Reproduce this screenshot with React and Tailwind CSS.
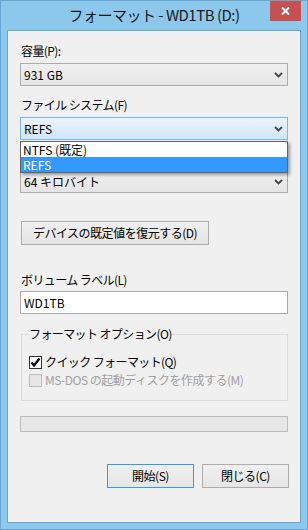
import React from 'react';

const font = { fontFamily: '"Noto Sans CJK JP", "Noto Sans", sans-serif' };

const Chevron = () => (
  <svg width="9" height="6" viewBox="0 0 9 6" className="shrink-0">
    <polyline points="1,1 4.5,4.5 8,1" fill="none" stroke="#444" strokeWidth="1.8" />
  </svg>
);

const Combo = ({ value, focused }) => (
  <div
    className={`w-[268px] h-[23px] border flex items-center justify-between pl-[3px] pr-[4px] text-[12px] leading-[16px] text-black ${
      focused
        ? 'border-[#7eb4ea] bg-gradient-to-b from-[#ecf4fc] to-[#d0e5f9]'
        : 'border-[#acacac] bg-gradient-to-b from-[#f0f0f0] to-[#e5e5e5]'
    }`}
  >
    <span>{value}</span>
    <Chevron />
  </div>
);

const Label = ({ children, className = '' }) => (
  <div className={`h-[16px] leading-[16px] text-[12px] tracking-[-0.6px] text-black pl-[1px] ${className}`}>{children}</div>
);

const Button = ({ children, className = '', primary }) => (
  <div
    className={`h-[24px] border flex items-center justify-center text-[12px] leading-[16px] tracking-[-0.5px] text-black bg-gradient-to-b from-[#f0f0f0] to-[#e5e5e5] ${
      primary ? 'border-[#3399ff]' : 'border-[#acacac]'
    } ${className}`}
  >
    {children}
  </div>
);

export default function App() {
  return (
    <div style={font} className="w-[308px] h-[530px] bg-[#8bc8ec] border border-[#6aa5d2] flex flex-col relative">
      {/* title bar */}
      <div className="h-[29px] flex items-center justify-center text-[15px] tracking-[-0.5px] text-[#1a1a1a]">
        フォーマット - WD1TB (D:)
      </div>
      <div className="absolute top-0 right-[6px] w-[31px] h-[20px] bg-[#c75050] flex items-center justify-center">
        <svg width="9" height="8" viewBox="0 0 9 8">
          <path d="M1 0.5 L8 7.5 M8 0.5 L1 7.5" stroke="#fff" strokeWidth="2" />
        </svg>
      </div>

      {/* client area */}
      <div className="flex-1 mx-[6px] mb-[6px] border border-[#6aa5d2] bg-[#f0f0f0] pl-[12px] flex flex-col">
        <Label className="mt-[12px]">容量(P):</Label>
        <div className="mt-[4px]">
          <Combo value="931 GB" />
        </div>

        <Label className="mt-[11px]">ファイル システム(F)</Label>
        <div className="mt-[4px] relative z-10">
          <Combo value="REFS" focused />
          <div className="absolute top-[24px] left-0 w-[268px] border border-[#646464] bg-white text-[12px] leading-[15px] shadow-[2px_2px_3px_rgba(0,0,0,0.35)]">
            <div className="h-[15px] pl-[2px] text-black">NTFS (既定)</div>
            <div className="h-[15px] pl-[2px] bg-[#3399ff] text-white">REFS</div>
          </div>
        </div>

        {/* allocation unit label sits under the open list */}
        <div className="mt-[10px] h-[16px]" />
        <div className="mt-[4px]">
          <Combo value="64 キロバイト" />
        </div>

        <Button className="mt-[28px] ml-[1px] w-[188px] h-[23px]">デバイスの既定値を復元する(D)</Button>

        <Label className="mt-[27px]">ボリューム ラベル(L)</Label>
        <div className="mt-[3px] w-[268px] h-[23px] border border-[#abadb3] bg-white flex items-center pl-[3px] text-[12px] text-black">
          WD1TB
        </div>

        <fieldset className="mt-[12px] ml-[1px] w-[267px] border border-[#dcdcdc] px-[7px] pb-[11px]">
          <legend className="text-[12px] leading-[16px] tracking-[-0.6px] text-black px-0">フォーマット オプション(O)</legend>
          <div className="mt-[11px] h-[18px] flex items-center gap-[3px] text-[12px] tracking-[-0.6px] text-black">
            <div className="w-[13px] h-[13px] border border-[#333] bg-white flex items-center justify-center">
              <svg width="11" height="11" viewBox="0 0 11 11">
                <polyline points="1.5,5.5 4,8.5 9.5,1.5" fill="none" stroke="#000" strokeWidth="2.2" />
              </svg>
            </div>
            <span>クイック フォーマット(Q)</span>
          </div>
          <div className="h-[18px] flex items-center gap-[3px] text-[12px] tracking-[-0.5px] text-[#a0a0a0]">
            <div className="w-[13px] h-[13px] border border-[#bcbcbc] bg-[#e6e6e6]" />
            <span>MS-DOS の起動ディスクを作成する(M)</span>
          </div>
        </fieldset>

        <div className="mt-[15px] w-[268px] h-[16px] border border-[#bcbcbc] bg-[#e6e6e6]" />

        <div className="mt-[32px] flex justify-end gap-[8px] pr-[11px]">
          <Button primary className="w-[87px]">開始(S)</Button>
          <Button className="w-[87px]">閉じる(C)</Button>
        </div>
      </div>
    </div>
  );
}
